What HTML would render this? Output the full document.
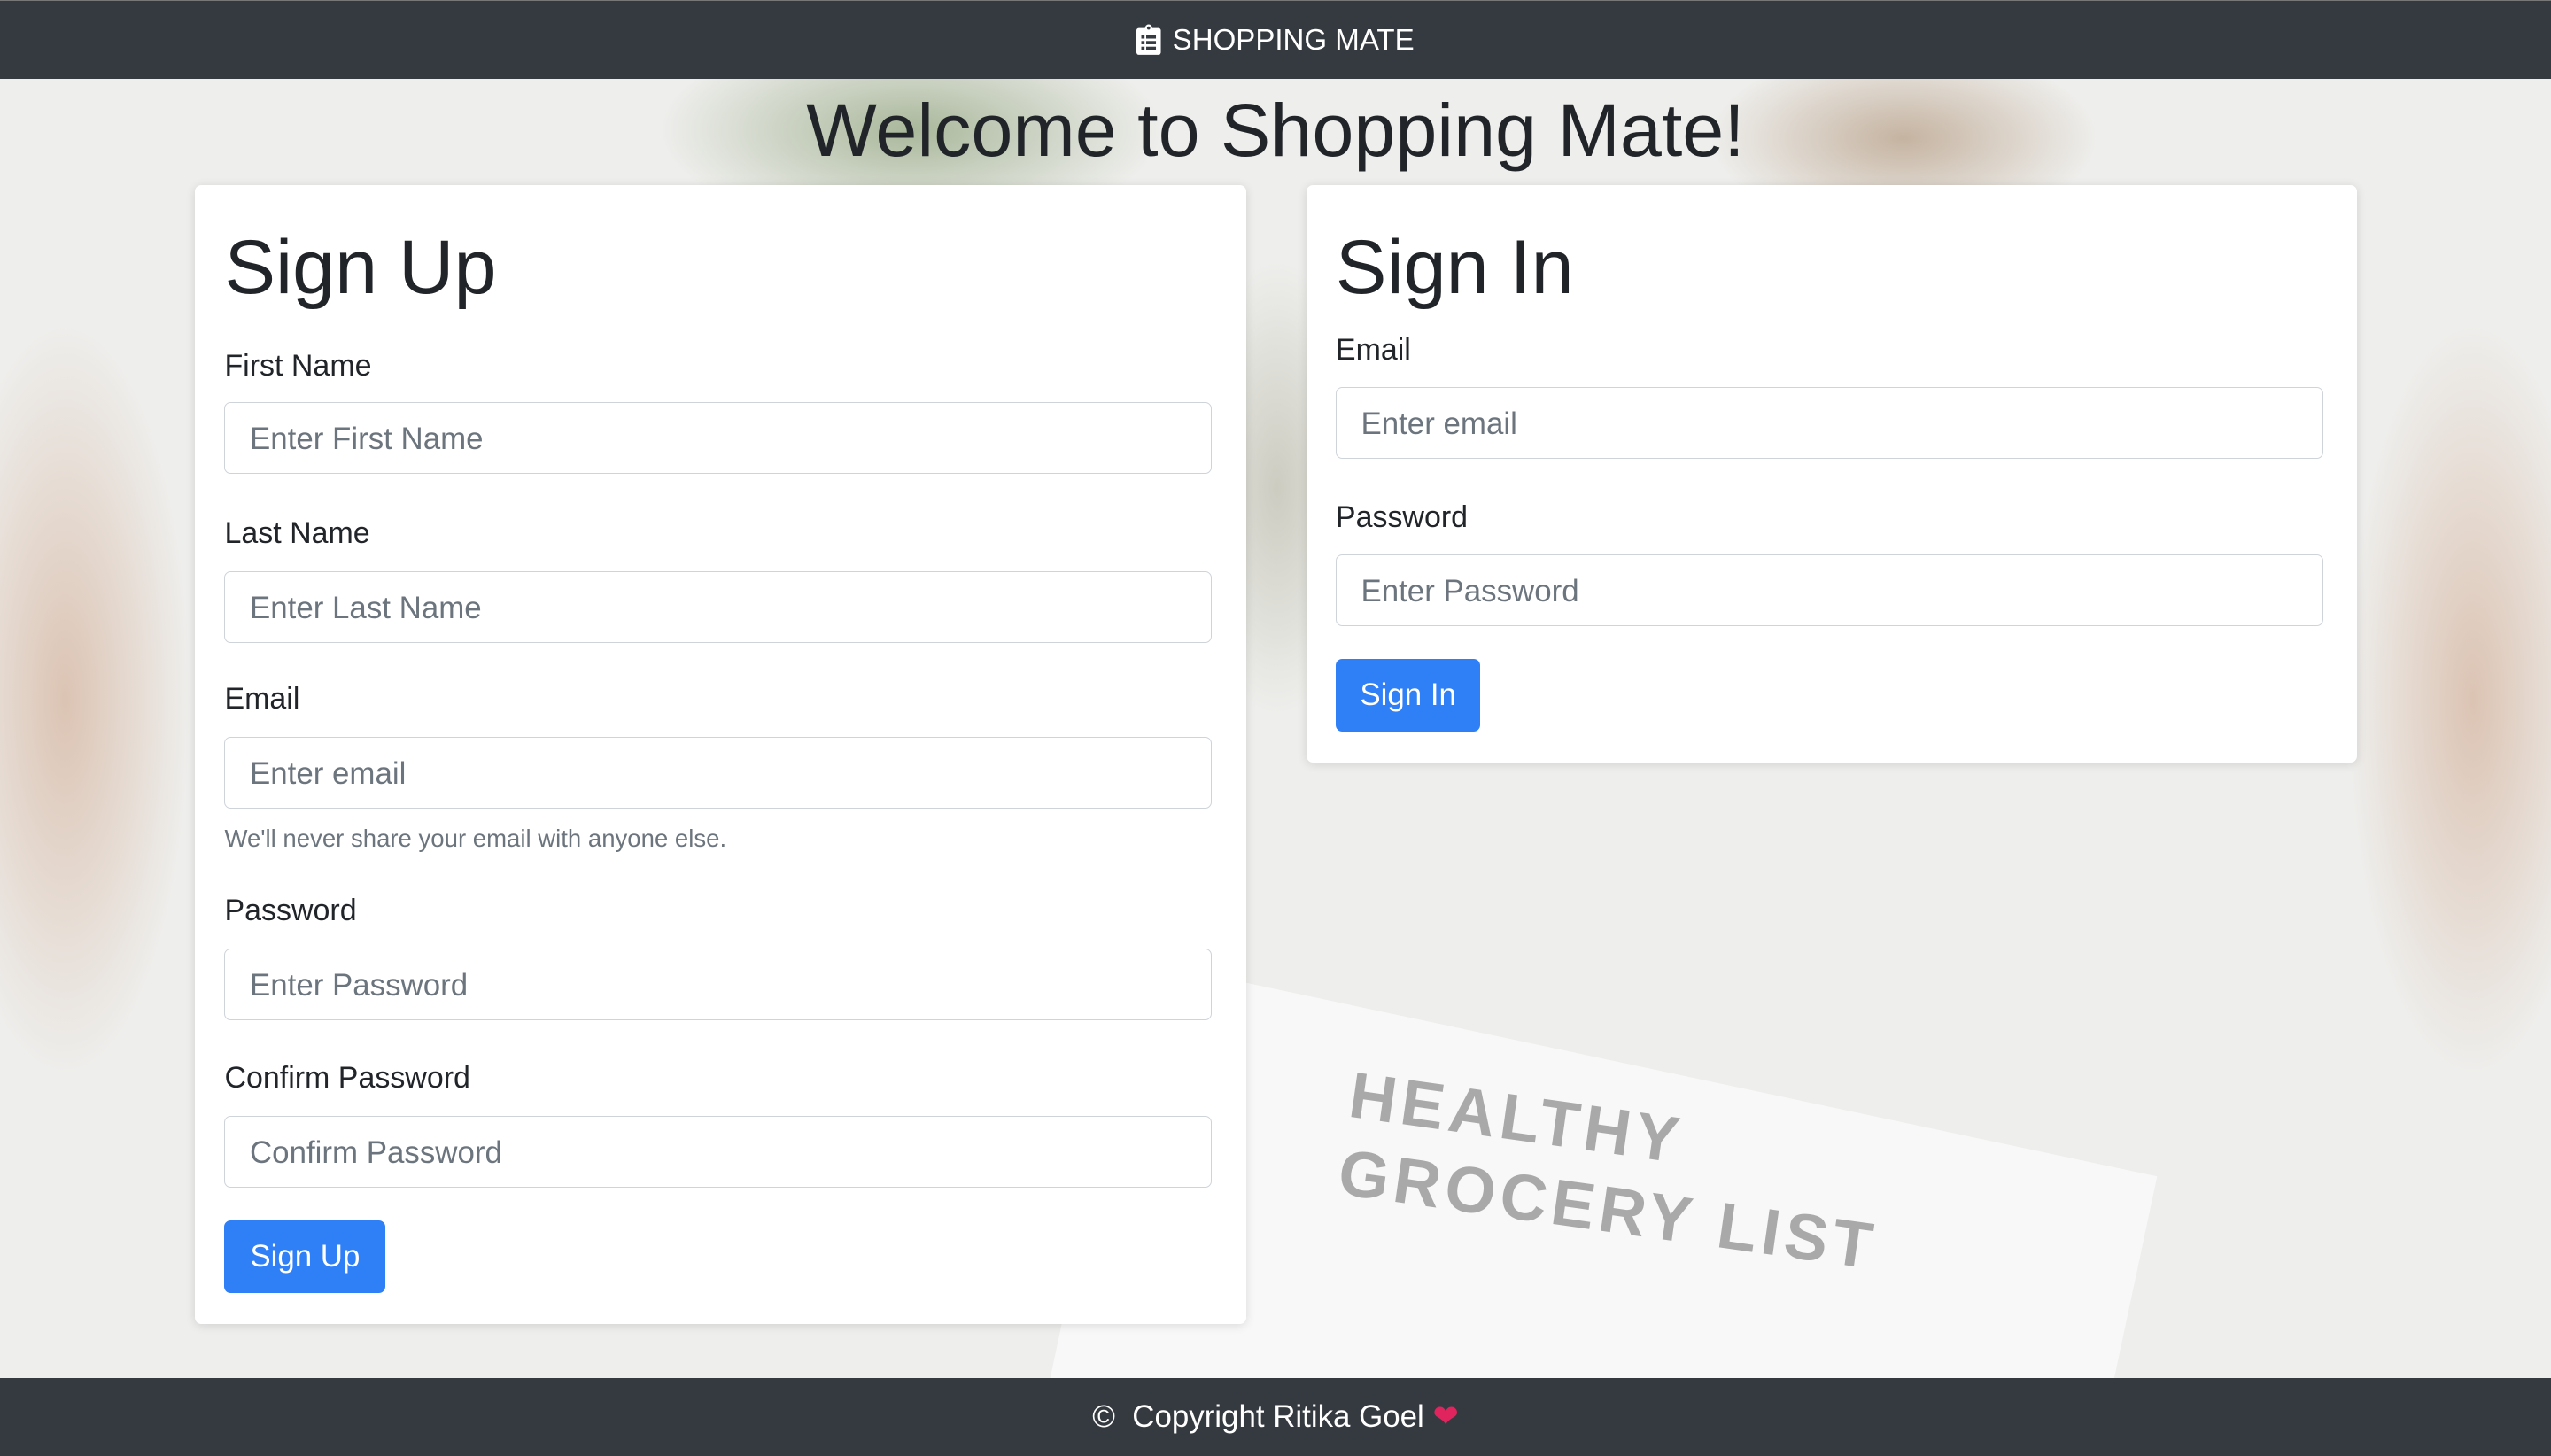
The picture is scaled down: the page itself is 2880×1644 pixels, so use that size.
<!DOCTYPE html>
<html><head><meta charset="utf-8"><style>
html,body{margin:0;padding:0;overflow:hidden;width:2880px;height:1644px}
#p{zoom:1.8367;width:1568px;height:895px;position:relative;overflow:hidden;font-family:"Liberation Sans",sans-serif;color:#212529;
background:
radial-gradient(ellipse 110px 330px at 40px 430px,rgba(215,185,165,.8),transparent 70%),
radial-gradient(ellipse 110px 330px at 1520px 430px,rgba(215,185,165,.8),transparent 70%),
radial-gradient(ellipse 220px 90px at 560px 80px,rgba(140,160,120,.7),transparent 70%),
radial-gradient(ellipse 170px 80px at 1170px 85px,rgba(170,140,110,.6),transparent 70%),
radial-gradient(ellipse 80px 200px at 785px 300px,rgba(170,170,150,.5),transparent 70%),
#eeeeec}
.nav,.foot{position:absolute;left:0;width:1568px;height:48px;background:#343a40;color:#fff;font-size:18px;text-align:center;line-height:48px}
.nav{top:0;border-top:1px solid #777;line-height:49px}
.foot{top:847px;font-size:19px}
.paper{position:absolute;left:700px;top:590px;width:640px;height:400px;background:#f8f8f8;transform:rotate(12deg);transform-origin:0 0}
.hg{position:absolute;left:825px;top:672px;font-size:40px;font-weight:bold;color:#a9a9a9;transform:rotate(8deg);letter-spacing:3px;line-height:48px}
h1{position:absolute;margin:0;font-weight:400;font-size:46px;left:0;width:1568px;text-align:center;top:54px}
.card{position:absolute;background:#fff;border-radius:4px;box-shadow:0 1px 6px rgba(0,0,0,.12)}
.h{position:absolute;font-size:47px;left:18px;top:24px}
.l{position:absolute;font-size:18.5px;left:18px;margin-top:1.5px}
.i{position:absolute;left:18px;width:606px;height:43px;border:1px solid #ced4da;border-radius:4px;font-size:19px;color:#6c757d;line-height:45px;text-indent:15px}
.s{position:absolute;left:18px;font-size:15px;color:#6c757d;margin-top:1px}
.b{position:absolute;left:18px;height:45px;background:#2f7ff7;color:#fff;border-radius:4px;font-size:19px;line-height:45px;text-align:center}
</style></head><body><div id="p">
<div class="paper"></div>
<div class="hg">HEALTHY<br>GROCERY LIST</div>
<div class="nav"><svg width="15" height="19" viewBox="0 0 15 19" style="vertical-align:-3px;margin-right:7px"><rect x="0" y="2.5" width="15" height="16.5" rx="1.5" fill="#fff"/><circle cx="7.5" cy="2.5" r="2.2" fill="#fff"/><circle cx="7.5" cy="2.5" r="1" fill="#343a40"/><g fill="#343a40"><rect x="3" y="7" width="2" height="2"/><rect x="6" y="7" width="6" height="2"/><rect x="3" y="10.5" width="2" height="2"/><rect x="6" y="10.5" width="6" height="2"/><rect x="3" y="14" width="2" height="2"/><rect x="6" y="14" width="6" height="2"/></g></svg>SHOPPING MATE</div>
<h1>Welcome to Shopping Mate!</h1>
<div class="card" style="left:120px;top:114px;width:646px;height:700px">
<div class="h">Sign Up</div>
<div class="l" style="top:99px">First Name</div><div class="i" style="top:133px">Enter First Name</div>
<div class="l" style="top:202px">Last Name</div><div class="i" style="top:237px">Enter Last Name</div>
<div class="l" style="top:304px">Email</div><div class="i" style="top:339px">Enter email</div>
<div class="s" style="top:392px">We'll never share your email with anyone else.</div>
<div class="l" style="top:434px">Password</div><div class="i" style="top:469px">Enter Password</div>
<div class="l" style="top:537px">Confirm Password</div><div class="i" style="top:572px">Confirm Password</div>
<div class="b" style="top:636px;width:99px">Sign Up</div>
</div>
<div class="card" style="left:803px;top:114px;width:646px;height:355px">
<div class="h">Sign In</div>
<div class="l" style="top:89px">Email</div><div class="i" style="top:124px">Enter email</div>
<div class="l" style="top:192px">Password</div><div class="i" style="top:227px">Enter Password</div>
<div class="b" style="top:291px;width:89px">Sign In</div>
</div>
<div class="foot">© &nbsp;Copyright Ritika Goel <span style="color:#e0245e">❤</span></div>
</div></body></html>
